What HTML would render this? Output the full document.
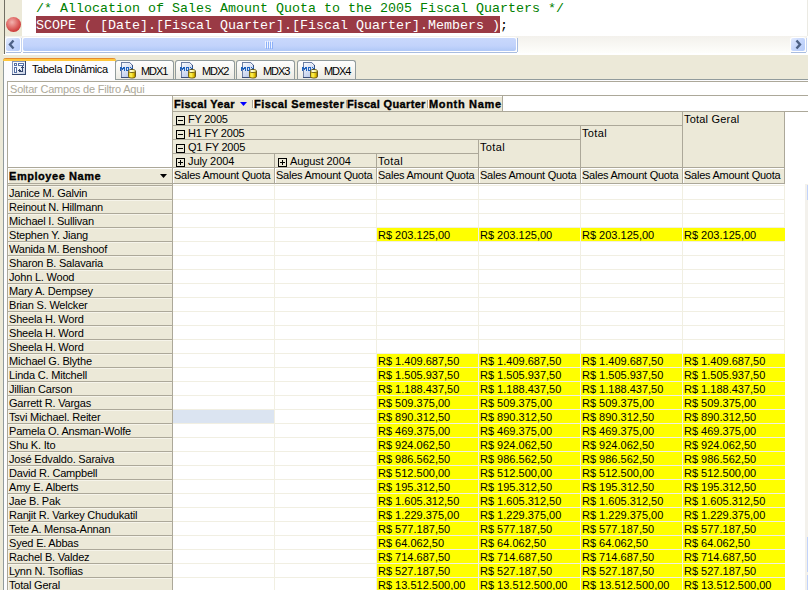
<!DOCTYPE html>
<html><head><meta charset="utf-8"><style>
html,body{margin:0;padding:0}
body{width:808px;height:590px;overflow:hidden;position:relative;background:#ece9d8;font-family:"Liberation Sans",sans-serif}
body>div,body>span,body>svg{position:absolute}
.t,.tb,.tab{font-size:11px;line-height:13px;white-space:nowrap;color:#000}
.tb{font-weight:bold;line-height:15px;-webkit-text-stroke:0.35px #000}
.tab{line-height:15px}
.code{font-family:"Liberation Mono",monospace;font-size:13.333px;line-height:17px;white-space:pre}
.sb{box-sizing:border-box;border-radius:2px;border:1px solid #fff;border-bottom-color:#9fb3d8;border-right-color:#b4c6ea;background:linear-gradient(#dbe5fd,#c6d6fb 50%,#b4cbf7)}
</style></head><body class="">
<div style="left:4px;top:0px;width:804px;height:54px;background:#fff"></div>
<div style="left:4px;top:0px;width:1px;height:54px;background:#716f64"></div>
<div style="left:3px;top:54px;width:805px;height:1px;background:#fff"></div>
<div style="left:5px;top:0px;width:17px;height:36px;background:#ece9d8"></div>
<div style="left:807px;top:0px;width:1px;height:36px;background:#ebeae3"></div>
<div style="left:6px;top:17px;width:15px;height:15px;border-radius:50%;background:radial-gradient(circle at 40% 35%,#f2b2ae 0%,#de6664 45%,#c83232 78%,#9c0e0e 100%)"></div>
<div style="left:36px;top:16px;width:464px;height:17px;background:#9a3a45"></div>
<span class="code" style="left:36px;top:0px;color:#008000">/* Allocation of Sales Amount Quota to the 2005 Fiscal Quarters */</span>
<span class="code" style="left:36px;top:17px;color:#fff">SCOPE ( [Date].[Fiscal Quarter].[Fiscal Quarter].Members )</span>
<span class="code" style="left:500px;top:17px;color:#000">;</span>
<div style="left:5px;top:36px;width:802px;height:17px;background:linear-gradient(#f3f1ec,#fefefb)"></div>
<div style="left:5px;top:37px;width:16px;height:15px;background:#fff;border-radius:3px"></div>
<div style="left:6px;top:52px;width:15px;height:1px;background:#a9bde0"></div>
<div style="left:21px;top:38px;width:1px;height:14px;background:#c4d3f0"></div>
<div style="left:6px;top:38px;width:14px;height:13px;border-radius:2px;background:linear-gradient(135deg,#e3ebfe,#c5d6fc 50%,#b5cbf8)"><svg width="14" height="13" style="position:absolute;left:0;top:0"><path d="M7.5 2.5 L4 6.5 L7.5 10.5" stroke="#4d6185" stroke-width="2.4" fill="none"/></svg></div>
<div style="left:790px;top:37px;width:16px;height:15px;background:#fff;border-radius:3px"></div>
<div style="left:791px;top:52px;width:15px;height:1px;background:#a9bde0"></div>
<div style="left:806px;top:38px;width:1px;height:14px;background:#c4d3f0"></div>
<div style="left:791px;top:38px;width:14px;height:13px;border-radius:2px;background:linear-gradient(135deg,#e3ebfe,#c5d6fc 50%,#b5cbf8)"><svg width="14" height="13" style="position:absolute;left:0;top:0"><path d="M5.5 2.5 L9 6.5 L5.5 10.5" stroke="#4d6185" stroke-width="2.4" fill="none"/></svg></div>
<div style="left:22px;top:37px;width:495px;height:15px;background:#fff;border-radius:3px"></div>
<div style="left:23px;top:52px;width:494px;height:1px;background:#a9bde0"></div>
<div style="left:517px;top:38px;width:1px;height:14px;background:#a9bde0"></div>
<div style="left:23px;top:38px;width:493px;height:13px;border-radius:2px;background:linear-gradient(#c9d8fc,#c2d3fb 60%,#b0c8f7)"><svg width="10" height="8" style="position:absolute;left:242px;top:3px"><path d="M0.5 0v7M2.5 0v7M4.5 0v7M6.5 0v7" stroke="#eef3fe" stroke-width="1"/><path d="M1.5 1v7M3.5 1v7M5.5 1v7M7.5 1v7" stroke="#8cb0f8" stroke-width="1"/></svg></div>
<div style="left:3px;top:79px;width:805px;height:511px;background:#fcfcfe"></div>
<div style="left:3px;top:79px;width:805px;height:1px;background:#919b9c"></div>
<div style="left:3px;top:79px;width:1px;height:511px;background:#919b9c"></div>
<div style="left:3px;top:58px;width:113px;height:22px;background:#fcfcfe;border-left:1px solid #919b9c;border-right:1px solid #919b9c;box-sizing:border-box;border-radius:3px 3px 0 0"></div>
<div style="left:3px;top:58px;width:113px;height:3px;background:linear-gradient(#e68b2c 0,#e68b2c 1px,#ffc73c 1px);border-radius:3px 3px 0 0"></div>
<svg style="left:12px;top:61px" width="14" height="14" viewBox="0 0 14 14" shape-rendering="crispEdges">
<defs><linearGradient id="pg" x1="0" y1="0" x2="1" y2="1"><stop offset="0" stop-color="#ffffff"/><stop offset="0.5" stop-color="#f2f5fb"/><stop offset="1" stop-color="#b9c5de"/></linearGradient></defs>
<rect x="0" y="0" width="14" height="14" fill="url(#pg)"/>
<rect x="0" y="0" width="13" height="1" fill="#8294ba"/><rect x="0" y="0" width="1" height="13" fill="#8294ba"/>
<rect x="0" y="13" width="14" height="1" fill="#34466e"/><rect x="13" y="0" width="1" height="14" fill="#34466e"/>
<rect x="2" y="2" width="3" height="3" fill="#5670a6"/><rect x="3" y="3" width="1" height="1" fill="#fff"/>
<rect x="6" y="2" width="6" height="3" fill="#5670a6"/><rect x="7" y="3" width="4" height="1" fill="#fff"/>
<rect x="2" y="6" width="3" height="6" fill="#5670a6"/><rect x="3" y="7" width="1" height="4" fill="#fff"/>
<rect x="6" y="9" width="3" height="1" fill="#34466e"/><rect x="7" y="8" width="1" height="3" fill="#34466e"/>
<rect x="8" y="10" width="2" height="1" fill="#34466e"/><rect x="10" y="8" width="1" height="3" fill="#34466e"/>
<rect x="9" y="6" width="3" height="1" fill="#34466e"/><rect x="10" y="5" width="1" height="3" fill="#34466e"/>
</svg>
<span class="tab" style="left:32px;top:62px;letter-spacing:-0.38px">Tabela Dinâmica</span>
<div style="left:115px;top:60px;width:59px;height:19px;box-sizing:border-box;border:1px solid #919b9c;border-bottom:none;border-radius:3px 3px 0 0;background:linear-gradient(#fefefe,#f4f3ee 60%,#ebeae4)"></div>
<svg style="left:118px;top:62px" width="18" height="17" viewBox="0 0 18 17" shape-rendering="crispEdges">
<defs><linearGradient id="dg118" x1="0" y1="0" x2="0.6" y2="1"><stop offset="0" stop-color="#ffffff"/><stop offset="1" stop-color="#b8c8ea"/></linearGradient>
<linearGradient id="cg118" x1="0" y1="0" x2="1" y2="0"><stop offset="0" stop-color="#e6c200"/><stop offset="0.35" stop-color="#fff45a"/><stop offset="0.75" stop-color="#e0bd00"/><stop offset="1" stop-color="#7a6200"/></linearGradient></defs>
<path d="M3 0h9l3 3v13H3z" fill="url(#dg118)"/>
<rect x="3" y="0" width="9" height="1" fill="#6d7fa3"/><rect x="3" y="0" width="1" height="16" fill="#6d7fa3"/>
<rect x="3" y="15" width="12" height="1" fill="#3d4f77"/><rect x="14" y="3" width="1" height="13" fill="#3d4f77"/>
<rect x="12" y="1" width="1" height="1" fill="#6d7fa3"/><rect x="13" y="2" width="1" height="1" fill="#6d7fa3"/><rect x="12" y="2" width="1" height="1" fill="#fff"/>
<rect x="2" y="5" width="1" height="1" fill="#1f62bd"/><rect x="3" y="5" width="1" height="1" fill="#1f62bd"/><rect x="5" y="5" width="1" height="1" fill="#1f62bd"/><rect x="6" y="5" width="1" height="1" fill="#1f62bd"/><rect x="2" y="6" width="1" height="1" fill="#1f62bd"/><rect x="3" y="6" width="1" height="1" fill="#1f62bd"/><rect x="4" y="6" width="1" height="1" fill="#1f62bd"/><rect x="5" y="6" width="1" height="1" fill="#1f62bd"/><rect x="6" y="6" width="1" height="1" fill="#1f62bd"/><rect x="2" y="7" width="1" height="1" fill="#1f62bd"/><rect x="4" y="7" width="1" height="1" fill="#1f62bd"/><rect x="6" y="7" width="1" height="1" fill="#1f62bd"/><rect x="2" y="8" width="1" height="1" fill="#1f62bd"/><rect x="6" y="8" width="1" height="1" fill="#1f62bd"/><rect x="8" y="5" width="1" height="1" fill="#1f62bd"/><rect x="9" y="5" width="1" height="1" fill="#1f62bd"/><rect x="10" y="5" width="1" height="1" fill="#1f62bd"/><rect x="8" y="6" width="1" height="1" fill="#1f62bd"/><rect x="10" y="6" width="1" height="1" fill="#1f62bd"/><rect x="8" y="7" width="1" height="1" fill="#1f62bd"/><rect x="10" y="7" width="1" height="1" fill="#1f62bd"/><rect x="8" y="8" width="1" height="1" fill="#1f62bd"/><rect x="9" y="8" width="1" height="1" fill="#1f62bd"/><rect x="10" y="8" width="1" height="1" fill="#1f62bd"/><rect x="12" y="5" width="1" height="1" fill="#1f62bd"/><rect x="14" y="5" width="1" height="1" fill="#1f62bd"/><rect x="13" y="6" width="1" height="1" fill="#1f62bd"/><rect x="12" y="7" width="1" height="1" fill="#1f62bd"/><rect x="13" y="7" width="1" height="1" fill="#1f62bd"/><rect x="14" y="7" width="1" height="1" fill="#1f62bd"/><rect x="12" y="8" width="1" height="1" fill="#1f62bd"/><rect x="14" y="8" width="1" height="1" fill="#1f62bd"/>
<g shape-rendering="auto"><path d="M10.5 9 v5.5 a3.5 1.6 0 0 0 7 0 v-5.5" fill="url(#cg118)" stroke="#5a4800" stroke-width="0.8"/>
<ellipse cx="14" cy="9" rx="3.5" ry="1.6" fill="#fff8a0" stroke="#5a4800" stroke-width="0.8"/>
<ellipse cx="12.8" cy="9" rx="1.3" ry="0.7" fill="#ffffff"/></g>
</svg>
<span class="tab" style="left:141px;top:64px;letter-spacing:-1.1px">MDX1</span>
<div style="left:175px;top:60px;width:60px;height:19px;box-sizing:border-box;border:1px solid #919b9c;border-bottom:none;border-radius:3px 3px 0 0;background:linear-gradient(#fefefe,#f4f3ee 60%,#ebeae4)"></div>
<svg style="left:178px;top:62px" width="18" height="17" viewBox="0 0 18 17" shape-rendering="crispEdges">
<defs><linearGradient id="dg178" x1="0" y1="0" x2="0.6" y2="1"><stop offset="0" stop-color="#ffffff"/><stop offset="1" stop-color="#b8c8ea"/></linearGradient>
<linearGradient id="cg178" x1="0" y1="0" x2="1" y2="0"><stop offset="0" stop-color="#e6c200"/><stop offset="0.35" stop-color="#fff45a"/><stop offset="0.75" stop-color="#e0bd00"/><stop offset="1" stop-color="#7a6200"/></linearGradient></defs>
<path d="M3 0h9l3 3v13H3z" fill="url(#dg178)"/>
<rect x="3" y="0" width="9" height="1" fill="#6d7fa3"/><rect x="3" y="0" width="1" height="16" fill="#6d7fa3"/>
<rect x="3" y="15" width="12" height="1" fill="#3d4f77"/><rect x="14" y="3" width="1" height="13" fill="#3d4f77"/>
<rect x="12" y="1" width="1" height="1" fill="#6d7fa3"/><rect x="13" y="2" width="1" height="1" fill="#6d7fa3"/><rect x="12" y="2" width="1" height="1" fill="#fff"/>
<rect x="2" y="5" width="1" height="1" fill="#1f62bd"/><rect x="3" y="5" width="1" height="1" fill="#1f62bd"/><rect x="5" y="5" width="1" height="1" fill="#1f62bd"/><rect x="6" y="5" width="1" height="1" fill="#1f62bd"/><rect x="2" y="6" width="1" height="1" fill="#1f62bd"/><rect x="3" y="6" width="1" height="1" fill="#1f62bd"/><rect x="4" y="6" width="1" height="1" fill="#1f62bd"/><rect x="5" y="6" width="1" height="1" fill="#1f62bd"/><rect x="6" y="6" width="1" height="1" fill="#1f62bd"/><rect x="2" y="7" width="1" height="1" fill="#1f62bd"/><rect x="4" y="7" width="1" height="1" fill="#1f62bd"/><rect x="6" y="7" width="1" height="1" fill="#1f62bd"/><rect x="2" y="8" width="1" height="1" fill="#1f62bd"/><rect x="6" y="8" width="1" height="1" fill="#1f62bd"/><rect x="8" y="5" width="1" height="1" fill="#1f62bd"/><rect x="9" y="5" width="1" height="1" fill="#1f62bd"/><rect x="10" y="5" width="1" height="1" fill="#1f62bd"/><rect x="8" y="6" width="1" height="1" fill="#1f62bd"/><rect x="10" y="6" width="1" height="1" fill="#1f62bd"/><rect x="8" y="7" width="1" height="1" fill="#1f62bd"/><rect x="10" y="7" width="1" height="1" fill="#1f62bd"/><rect x="8" y="8" width="1" height="1" fill="#1f62bd"/><rect x="9" y="8" width="1" height="1" fill="#1f62bd"/><rect x="10" y="8" width="1" height="1" fill="#1f62bd"/><rect x="12" y="5" width="1" height="1" fill="#1f62bd"/><rect x="14" y="5" width="1" height="1" fill="#1f62bd"/><rect x="13" y="6" width="1" height="1" fill="#1f62bd"/><rect x="12" y="7" width="1" height="1" fill="#1f62bd"/><rect x="13" y="7" width="1" height="1" fill="#1f62bd"/><rect x="14" y="7" width="1" height="1" fill="#1f62bd"/><rect x="12" y="8" width="1" height="1" fill="#1f62bd"/><rect x="14" y="8" width="1" height="1" fill="#1f62bd"/>
<g shape-rendering="auto"><path d="M10.5 9 v5.5 a3.5 1.6 0 0 0 7 0 v-5.5" fill="url(#cg178)" stroke="#5a4800" stroke-width="0.8"/>
<ellipse cx="14" cy="9" rx="3.5" ry="1.6" fill="#fff8a0" stroke="#5a4800" stroke-width="0.8"/>
<ellipse cx="12.8" cy="9" rx="1.3" ry="0.7" fill="#ffffff"/></g>
</svg>
<span class="tab" style="left:202px;top:64px;letter-spacing:-1.1px">MDX2</span>
<div style="left:236px;top:60px;width:59px;height:19px;box-sizing:border-box;border:1px solid #919b9c;border-bottom:none;border-radius:3px 3px 0 0;background:linear-gradient(#fefefe,#f4f3ee 60%,#ebeae4)"></div>
<svg style="left:239px;top:62px" width="18" height="17" viewBox="0 0 18 17" shape-rendering="crispEdges">
<defs><linearGradient id="dg239" x1="0" y1="0" x2="0.6" y2="1"><stop offset="0" stop-color="#ffffff"/><stop offset="1" stop-color="#b8c8ea"/></linearGradient>
<linearGradient id="cg239" x1="0" y1="0" x2="1" y2="0"><stop offset="0" stop-color="#e6c200"/><stop offset="0.35" stop-color="#fff45a"/><stop offset="0.75" stop-color="#e0bd00"/><stop offset="1" stop-color="#7a6200"/></linearGradient></defs>
<path d="M3 0h9l3 3v13H3z" fill="url(#dg239)"/>
<rect x="3" y="0" width="9" height="1" fill="#6d7fa3"/><rect x="3" y="0" width="1" height="16" fill="#6d7fa3"/>
<rect x="3" y="15" width="12" height="1" fill="#3d4f77"/><rect x="14" y="3" width="1" height="13" fill="#3d4f77"/>
<rect x="12" y="1" width="1" height="1" fill="#6d7fa3"/><rect x="13" y="2" width="1" height="1" fill="#6d7fa3"/><rect x="12" y="2" width="1" height="1" fill="#fff"/>
<rect x="2" y="5" width="1" height="1" fill="#1f62bd"/><rect x="3" y="5" width="1" height="1" fill="#1f62bd"/><rect x="5" y="5" width="1" height="1" fill="#1f62bd"/><rect x="6" y="5" width="1" height="1" fill="#1f62bd"/><rect x="2" y="6" width="1" height="1" fill="#1f62bd"/><rect x="3" y="6" width="1" height="1" fill="#1f62bd"/><rect x="4" y="6" width="1" height="1" fill="#1f62bd"/><rect x="5" y="6" width="1" height="1" fill="#1f62bd"/><rect x="6" y="6" width="1" height="1" fill="#1f62bd"/><rect x="2" y="7" width="1" height="1" fill="#1f62bd"/><rect x="4" y="7" width="1" height="1" fill="#1f62bd"/><rect x="6" y="7" width="1" height="1" fill="#1f62bd"/><rect x="2" y="8" width="1" height="1" fill="#1f62bd"/><rect x="6" y="8" width="1" height="1" fill="#1f62bd"/><rect x="8" y="5" width="1" height="1" fill="#1f62bd"/><rect x="9" y="5" width="1" height="1" fill="#1f62bd"/><rect x="10" y="5" width="1" height="1" fill="#1f62bd"/><rect x="8" y="6" width="1" height="1" fill="#1f62bd"/><rect x="10" y="6" width="1" height="1" fill="#1f62bd"/><rect x="8" y="7" width="1" height="1" fill="#1f62bd"/><rect x="10" y="7" width="1" height="1" fill="#1f62bd"/><rect x="8" y="8" width="1" height="1" fill="#1f62bd"/><rect x="9" y="8" width="1" height="1" fill="#1f62bd"/><rect x="10" y="8" width="1" height="1" fill="#1f62bd"/><rect x="12" y="5" width="1" height="1" fill="#1f62bd"/><rect x="14" y="5" width="1" height="1" fill="#1f62bd"/><rect x="13" y="6" width="1" height="1" fill="#1f62bd"/><rect x="12" y="7" width="1" height="1" fill="#1f62bd"/><rect x="13" y="7" width="1" height="1" fill="#1f62bd"/><rect x="14" y="7" width="1" height="1" fill="#1f62bd"/><rect x="12" y="8" width="1" height="1" fill="#1f62bd"/><rect x="14" y="8" width="1" height="1" fill="#1f62bd"/>
<g shape-rendering="auto"><path d="M10.5 9 v5.5 a3.5 1.6 0 0 0 7 0 v-5.5" fill="url(#cg239)" stroke="#5a4800" stroke-width="0.8"/>
<ellipse cx="14" cy="9" rx="3.5" ry="1.6" fill="#fff8a0" stroke="#5a4800" stroke-width="0.8"/>
<ellipse cx="12.8" cy="9" rx="1.3" ry="0.7" fill="#ffffff"/></g>
</svg>
<span class="tab" style="left:263px;top:64px;letter-spacing:-1.1px">MDX3</span>
<div style="left:297px;top:60px;width:59px;height:19px;box-sizing:border-box;border:1px solid #919b9c;border-bottom:none;border-radius:3px 3px 0 0;background:linear-gradient(#fefefe,#f4f3ee 60%,#ebeae4)"></div>
<svg style="left:300px;top:62px" width="18" height="17" viewBox="0 0 18 17" shape-rendering="crispEdges">
<defs><linearGradient id="dg300" x1="0" y1="0" x2="0.6" y2="1"><stop offset="0" stop-color="#ffffff"/><stop offset="1" stop-color="#b8c8ea"/></linearGradient>
<linearGradient id="cg300" x1="0" y1="0" x2="1" y2="0"><stop offset="0" stop-color="#e6c200"/><stop offset="0.35" stop-color="#fff45a"/><stop offset="0.75" stop-color="#e0bd00"/><stop offset="1" stop-color="#7a6200"/></linearGradient></defs>
<path d="M3 0h9l3 3v13H3z" fill="url(#dg300)"/>
<rect x="3" y="0" width="9" height="1" fill="#6d7fa3"/><rect x="3" y="0" width="1" height="16" fill="#6d7fa3"/>
<rect x="3" y="15" width="12" height="1" fill="#3d4f77"/><rect x="14" y="3" width="1" height="13" fill="#3d4f77"/>
<rect x="12" y="1" width="1" height="1" fill="#6d7fa3"/><rect x="13" y="2" width="1" height="1" fill="#6d7fa3"/><rect x="12" y="2" width="1" height="1" fill="#fff"/>
<rect x="2" y="5" width="1" height="1" fill="#1f62bd"/><rect x="3" y="5" width="1" height="1" fill="#1f62bd"/><rect x="5" y="5" width="1" height="1" fill="#1f62bd"/><rect x="6" y="5" width="1" height="1" fill="#1f62bd"/><rect x="2" y="6" width="1" height="1" fill="#1f62bd"/><rect x="3" y="6" width="1" height="1" fill="#1f62bd"/><rect x="4" y="6" width="1" height="1" fill="#1f62bd"/><rect x="5" y="6" width="1" height="1" fill="#1f62bd"/><rect x="6" y="6" width="1" height="1" fill="#1f62bd"/><rect x="2" y="7" width="1" height="1" fill="#1f62bd"/><rect x="4" y="7" width="1" height="1" fill="#1f62bd"/><rect x="6" y="7" width="1" height="1" fill="#1f62bd"/><rect x="2" y="8" width="1" height="1" fill="#1f62bd"/><rect x="6" y="8" width="1" height="1" fill="#1f62bd"/><rect x="8" y="5" width="1" height="1" fill="#1f62bd"/><rect x="9" y="5" width="1" height="1" fill="#1f62bd"/><rect x="10" y="5" width="1" height="1" fill="#1f62bd"/><rect x="8" y="6" width="1" height="1" fill="#1f62bd"/><rect x="10" y="6" width="1" height="1" fill="#1f62bd"/><rect x="8" y="7" width="1" height="1" fill="#1f62bd"/><rect x="10" y="7" width="1" height="1" fill="#1f62bd"/><rect x="8" y="8" width="1" height="1" fill="#1f62bd"/><rect x="9" y="8" width="1" height="1" fill="#1f62bd"/><rect x="10" y="8" width="1" height="1" fill="#1f62bd"/><rect x="12" y="5" width="1" height="1" fill="#1f62bd"/><rect x="14" y="5" width="1" height="1" fill="#1f62bd"/><rect x="13" y="6" width="1" height="1" fill="#1f62bd"/><rect x="12" y="7" width="1" height="1" fill="#1f62bd"/><rect x="13" y="7" width="1" height="1" fill="#1f62bd"/><rect x="14" y="7" width="1" height="1" fill="#1f62bd"/><rect x="12" y="8" width="1" height="1" fill="#1f62bd"/><rect x="14" y="8" width="1" height="1" fill="#1f62bd"/>
<g shape-rendering="auto"><path d="M10.5 9 v5.5 a3.5 1.6 0 0 0 7 0 v-5.5" fill="url(#cg300)" stroke="#5a4800" stroke-width="0.8"/>
<ellipse cx="14" cy="9" rx="3.5" ry="1.6" fill="#fff8a0" stroke="#5a4800" stroke-width="0.8"/>
<ellipse cx="12.8" cy="9" rx="1.3" ry="0.7" fill="#ffffff"/></g>
</svg>
<span class="tab" style="left:324px;top:64px;letter-spacing:-1.1px">MDX4</span>
<div style="left:7px;top:81px;width:801px;height:15px;background:#fff;border:1px solid #aca899;border-right:none;box-sizing:border-box"></div>
<span class="t" style="left:10px;top:83px;color:#aca899;letter-spacing:-0.2px">Soltar Campos de Filtro Aqui</span>
<div style="left:7px;top:95px;width:1px;height:495px;background:#aca899"></div>
<div style="left:8px;top:96px;width:800px;height:494px;background:#fff"></div>
<div style="left:173px;top:96px;width:330px;height:15px;background:#ece9d8;border-top:1px solid #fff;box-sizing:border-box"></div>
<div style="left:172px;top:95px;width:1px;height:495px;background:#aca899"></div>
<div style="left:502px;top:96px;width:1px;height:15px;background:#aca899"></div>
<div style="left:173px;top:111px;width:635px;height:1px;background:#aca899"></div>
<span class="tb" style="left:174px;top:97px;letter-spacing:0.32px">Fiscal Year</span>
<svg style="left:240px;top:102px" width="7" height="4"><path d="M0 0h7L3.5 4z" fill="#0000ff"/></svg>
<div style="left:252px;top:100px;width:1px;height:8px;background:#aca899"></div>
<div style="left:253px;top:100px;width:1px;height:8px;background:#fff"></div>
<span class="tb" style="left:254px;top:97px;letter-spacing:0.44px">Fiscal Semester</span>
<div style="left:346px;top:100px;width:1px;height:8px;background:#aca899"></div>
<div style="left:347px;top:100px;width:1px;height:8px;background:#fff"></div>
<span class="tb" style="left:347px;top:97px;letter-spacing:0.34px">Fiscal Quarter</span>
<div style="left:427px;top:100px;width:1px;height:8px;background:#aca899"></div>
<div style="left:428px;top:100px;width:1px;height:8px;background:#fff"></div>
<span class="tb" style="left:429px;top:97px;letter-spacing:0.67px">Month Name</span>
<div style="left:173px;top:112px;width:509px;height:13px;background:#ece9d8;box-sizing:border-box"></div>
<div style="left:682px;top:112px;width:1px;height:14px;background:#aca899"></div>
<div style="left:172px;top:125px;width:511px;height:1px;background:#aca899"></div>
<svg style="left:176px;top:116px" width="9" height="9"><rect x="0.5" y="0.5" width="8" height="8" fill="none" stroke="#000"/><path d="M2 4.5h5" stroke="#000"/></svg>
<span class="t" style="left:188px;top:113px;letter-spacing:-0.25px">FY 2005</span>
<div style="left:683px;top:112px;width:101px;height:55px;background:#ece9d8;box-sizing:border-box"></div>
<div style="left:784px;top:112px;width:1px;height:56px;background:#aca899"></div>
<div style="left:682px;top:167px;width:103px;height:1px;background:#aca899"></div>
<span class="t" style="left:684px;top:113px;letter-spacing:0.2px">Total Geral</span>
<div style="left:173px;top:126px;width:407px;height:13px;background:#ece9d8;box-sizing:border-box"></div>
<div style="left:580px;top:126px;width:1px;height:14px;background:#aca899"></div>
<div style="left:172px;top:139px;width:409px;height:1px;background:#aca899"></div>
<svg style="left:176px;top:130px" width="9" height="9"><rect x="0.5" y="0.5" width="8" height="8" fill="none" stroke="#000"/><path d="M2 4.5h5" stroke="#000"/></svg>
<span class="t" style="left:188px;top:127px;letter-spacing:-0.2px">H1 FY 2005</span>
<div style="left:581px;top:126px;width:101px;height:41px;background:#ece9d8;box-sizing:border-box"></div>
<div style="left:682px;top:126px;width:1px;height:42px;background:#aca899"></div>
<div style="left:580px;top:167px;width:103px;height:1px;background:#aca899"></div>
<span class="t" style="left:582px;top:127px;letter-spacing:0.35px">Total</span>
<div style="left:173px;top:140px;width:305px;height:13px;background:#ece9d8;box-sizing:border-box"></div>
<div style="left:478px;top:140px;width:1px;height:14px;background:#aca899"></div>
<div style="left:172px;top:153px;width:307px;height:1px;background:#aca899"></div>
<svg style="left:176px;top:144px" width="9" height="9"><rect x="0.5" y="0.5" width="8" height="8" fill="none" stroke="#000"/><path d="M2 4.5h5" stroke="#000"/></svg>
<span class="t" style="left:188px;top:141px;letter-spacing:-0.2px">Q1 FY 2005</span>
<div style="left:479px;top:140px;width:101px;height:27px;background:#ece9d8;box-sizing:border-box"></div>
<div style="left:580px;top:140px;width:1px;height:28px;background:#aca899"></div>
<div style="left:478px;top:167px;width:103px;height:1px;background:#aca899"></div>
<span class="t" style="left:480px;top:141px;letter-spacing:0.35px">Total</span>
<div style="left:173px;top:154px;width:101px;height:13px;background:#ece9d8;box-sizing:border-box"></div>
<div style="left:274px;top:154px;width:1px;height:14px;background:#aca899"></div>
<div style="left:172px;top:167px;width:103px;height:1px;background:#aca899"></div>
<svg style="left:176px;top:158px" width="9" height="9"><rect x="0.5" y="0.5" width="8" height="8" fill="none" stroke="#000"/><path d="M2 4.5h5M4.5 2v5" stroke="#000"/></svg>
<span class="t" style="left:188px;top:155px;letter-spacing:-0.1px">July 2004</span>
<div style="left:275px;top:154px;width:101px;height:13px;background:#ece9d8;box-sizing:border-box"></div>
<div style="left:376px;top:154px;width:1px;height:14px;background:#aca899"></div>
<div style="left:274px;top:167px;width:103px;height:1px;background:#aca899"></div>
<svg style="left:278px;top:158px" width="9" height="9"><rect x="0.5" y="0.5" width="8" height="8" fill="none" stroke="#000"/><path d="M2 4.5h5M4.5 2v5" stroke="#000"/></svg>
<span class="t" style="left:290px;top:155px;letter-spacing:-0.1px">August 2004</span>
<div style="left:377px;top:154px;width:101px;height:13px;background:#ece9d8;box-sizing:border-box"></div>
<div style="left:478px;top:154px;width:1px;height:14px;background:#aca899"></div>
<div style="left:376px;top:167px;width:103px;height:1px;background:#aca899"></div>
<span class="t" style="left:378px;top:155px;letter-spacing:0.35px">Total</span>
<div style="left:173px;top:168px;width:101px;height:15px;background:#ece9d8;border-left:1px solid #fff;border-top:1px solid #fff;box-sizing:border-box"></div>
<div style="left:274px;top:168px;width:1px;height:16px;background:#aca899"></div>
<div style="left:172px;top:183px;width:103px;height:1px;background:#aca899"></div>
<span class="t" style="left:174px;top:169px;letter-spacing:-0.25px">Sales Amount Quota</span>
<div style="left:275px;top:168px;width:101px;height:15px;background:#ece9d8;border-left:1px solid #fff;border-top:1px solid #fff;box-sizing:border-box"></div>
<div style="left:376px;top:168px;width:1px;height:16px;background:#aca899"></div>
<div style="left:274px;top:183px;width:103px;height:1px;background:#aca899"></div>
<span class="t" style="left:276px;top:169px;letter-spacing:-0.25px">Sales Amount Quota</span>
<div style="left:377px;top:168px;width:101px;height:15px;background:#ece9d8;border-left:1px solid #fff;border-top:1px solid #fff;box-sizing:border-box"></div>
<div style="left:478px;top:168px;width:1px;height:16px;background:#aca899"></div>
<div style="left:376px;top:183px;width:103px;height:1px;background:#aca899"></div>
<span class="t" style="left:378px;top:169px;letter-spacing:-0.25px">Sales Amount Quota</span>
<div style="left:479px;top:168px;width:101px;height:15px;background:#ece9d8;border-left:1px solid #fff;border-top:1px solid #fff;box-sizing:border-box"></div>
<div style="left:580px;top:168px;width:1px;height:16px;background:#aca899"></div>
<div style="left:478px;top:183px;width:103px;height:1px;background:#aca899"></div>
<span class="t" style="left:480px;top:169px;letter-spacing:-0.25px">Sales Amount Quota</span>
<div style="left:581px;top:168px;width:101px;height:15px;background:#ece9d8;border-left:1px solid #fff;border-top:1px solid #fff;box-sizing:border-box"></div>
<div style="left:682px;top:168px;width:1px;height:16px;background:#aca899"></div>
<div style="left:580px;top:183px;width:103px;height:1px;background:#aca899"></div>
<span class="t" style="left:582px;top:169px;letter-spacing:-0.25px">Sales Amount Quota</span>
<div style="left:683px;top:168px;width:101px;height:15px;background:#ece9d8;border-left:1px solid #fff;border-top:1px solid #fff;box-sizing:border-box"></div>
<div style="left:784px;top:168px;width:1px;height:16px;background:#aca899"></div>
<div style="left:682px;top:183px;width:103px;height:1px;background:#aca899"></div>
<span class="t" style="left:684px;top:169px;letter-spacing:-0.25px">Sales Amount Quota</span>
<div style="left:8px;top:168px;width:164px;height:15px;background:#ece9d8;border-left:1px solid #fff;border-top:1px solid #fff;box-sizing:border-box"></div>
<div style="left:8px;top:167px;width:164px;height:1px;background:#aca899"></div>
<div style="left:8px;top:183px;width:164px;height:1px;background:#aca899"></div>
<div style="left:8px;top:184px;width:164px;height:1px;background:#ece9d8"></div>
<div style="left:8px;top:185px;width:164px;height:1px;background:#aca899"></div>
<span class="tb" style="left:9px;top:169px;letter-spacing:0.55px">Employee Name</span>
<svg style="left:160px;top:174px" width="7" height="4"><path d="M0 0h7L3.5 4z" fill="#000"/></svg>
<div style="left:274px;top:184px;width:1px;height:406px;background:#f1efe2"></div>
<div style="left:376px;top:184px;width:1px;height:406px;background:#f1efe2"></div>
<div style="left:478px;top:184px;width:1px;height:406px;background:#f1efe2"></div>
<div style="left:580px;top:184px;width:1px;height:406px;background:#f1efe2"></div>
<div style="left:682px;top:184px;width:1px;height:406px;background:#f1efe2"></div>
<div style="left:784px;top:184px;width:1px;height:406px;background:#f1efe2"></div>
<div style="left:173px;top:185px;width:612px;height:1px;background:#f1efe2"></div>
<div style="left:8px;top:186px;width:164px;height:13px;background:#ece9d8;border-left:1px solid #f6f4ea;border-top:1px solid #f6f4ea;box-sizing:border-box"></div>
<div style="left:8px;top:199px;width:164px;height:1px;background:#aca899"></div>
<span class="t" style="left:9px;top:187px;letter-spacing:-0.2px">Janice M. Galvin</span>
<div style="left:173px;top:199px;width:612px;height:1px;background:#f1efe2"></div>
<div style="left:8px;top:200px;width:164px;height:13px;background:#ece9d8;border-left:1px solid #f6f4ea;border-top:1px solid #f6f4ea;box-sizing:border-box"></div>
<div style="left:8px;top:213px;width:164px;height:1px;background:#aca899"></div>
<span class="t" style="left:9px;top:201px;letter-spacing:-0.2px">Reinout N. Hillmann</span>
<div style="left:173px;top:213px;width:612px;height:1px;background:#f1efe2"></div>
<div style="left:8px;top:214px;width:164px;height:13px;background:#ece9d8;border-left:1px solid #f6f4ea;border-top:1px solid #f6f4ea;box-sizing:border-box"></div>
<div style="left:8px;top:227px;width:164px;height:1px;background:#aca899"></div>
<span class="t" style="left:9px;top:215px;letter-spacing:-0.2px">Michael I. Sullivan</span>
<div style="left:173px;top:227px;width:612px;height:1px;background:#f1efe2"></div>
<div style="left:8px;top:228px;width:164px;height:13px;background:#ece9d8;border-left:1px solid #f6f4ea;border-top:1px solid #f6f4ea;box-sizing:border-box"></div>
<div style="left:8px;top:241px;width:164px;height:1px;background:#aca899"></div>
<span class="t" style="left:9px;top:229px;letter-spacing:-0.2px">Stephen Y. Jiang</span>
<div style="left:377px;top:228px;width:101px;height:13px;background:#ffff00"></div>
<span class="t" style="left:378px;top:229px;">R$ 203.125,00</span>
<div style="left:479px;top:228px;width:101px;height:13px;background:#ffff00"></div>
<span class="t" style="left:480px;top:229px;">R$ 203.125,00</span>
<div style="left:581px;top:228px;width:101px;height:13px;background:#ffff00"></div>
<span class="t" style="left:582px;top:229px;">R$ 203.125,00</span>
<div style="left:683px;top:228px;width:102px;height:13px;background:#ffff00"></div>
<span class="t" style="left:684px;top:229px;">R$ 203.125,00</span>
<div style="left:173px;top:241px;width:612px;height:1px;background:#f1efe2"></div>
<div style="left:8px;top:242px;width:164px;height:13px;background:#ece9d8;border-left:1px solid #f6f4ea;border-top:1px solid #f6f4ea;box-sizing:border-box"></div>
<div style="left:8px;top:255px;width:164px;height:1px;background:#aca899"></div>
<span class="t" style="left:9px;top:243px;letter-spacing:-0.2px">Wanida M. Benshoof</span>
<div style="left:173px;top:255px;width:612px;height:1px;background:#f1efe2"></div>
<div style="left:8px;top:256px;width:164px;height:13px;background:#ece9d8;border-left:1px solid #f6f4ea;border-top:1px solid #f6f4ea;box-sizing:border-box"></div>
<div style="left:8px;top:269px;width:164px;height:1px;background:#aca899"></div>
<span class="t" style="left:9px;top:257px;letter-spacing:-0.2px">Sharon B. Salavaria</span>
<div style="left:173px;top:269px;width:612px;height:1px;background:#f1efe2"></div>
<div style="left:8px;top:270px;width:164px;height:13px;background:#ece9d8;border-left:1px solid #f6f4ea;border-top:1px solid #f6f4ea;box-sizing:border-box"></div>
<div style="left:8px;top:283px;width:164px;height:1px;background:#aca899"></div>
<span class="t" style="left:9px;top:271px;letter-spacing:-0.2px">John L. Wood</span>
<div style="left:173px;top:283px;width:612px;height:1px;background:#f1efe2"></div>
<div style="left:8px;top:284px;width:164px;height:13px;background:#ece9d8;border-left:1px solid #f6f4ea;border-top:1px solid #f6f4ea;box-sizing:border-box"></div>
<div style="left:8px;top:297px;width:164px;height:1px;background:#aca899"></div>
<span class="t" style="left:9px;top:285px;letter-spacing:-0.2px">Mary A. Dempsey</span>
<div style="left:173px;top:297px;width:612px;height:1px;background:#f1efe2"></div>
<div style="left:8px;top:298px;width:164px;height:13px;background:#ece9d8;border-left:1px solid #f6f4ea;border-top:1px solid #f6f4ea;box-sizing:border-box"></div>
<div style="left:8px;top:311px;width:164px;height:1px;background:#aca899"></div>
<span class="t" style="left:9px;top:299px;letter-spacing:-0.2px">Brian S. Welcker</span>
<div style="left:173px;top:311px;width:612px;height:1px;background:#f1efe2"></div>
<div style="left:8px;top:312px;width:164px;height:13px;background:#ece9d8;border-left:1px solid #f6f4ea;border-top:1px solid #f6f4ea;box-sizing:border-box"></div>
<div style="left:8px;top:325px;width:164px;height:1px;background:#aca899"></div>
<span class="t" style="left:9px;top:313px;letter-spacing:-0.2px">Sheela H. Word</span>
<div style="left:173px;top:325px;width:612px;height:1px;background:#f1efe2"></div>
<div style="left:8px;top:326px;width:164px;height:13px;background:#ece9d8;border-left:1px solid #f6f4ea;border-top:1px solid #f6f4ea;box-sizing:border-box"></div>
<div style="left:8px;top:339px;width:164px;height:1px;background:#aca899"></div>
<span class="t" style="left:9px;top:327px;letter-spacing:-0.2px">Sheela H. Word</span>
<div style="left:173px;top:339px;width:612px;height:1px;background:#f1efe2"></div>
<div style="left:8px;top:340px;width:164px;height:13px;background:#ece9d8;border-left:1px solid #f6f4ea;border-top:1px solid #f6f4ea;box-sizing:border-box"></div>
<div style="left:8px;top:353px;width:164px;height:1px;background:#aca899"></div>
<span class="t" style="left:9px;top:341px;letter-spacing:-0.2px">Sheela H. Word</span>
<div style="left:173px;top:353px;width:612px;height:1px;background:#f1efe2"></div>
<div style="left:8px;top:354px;width:164px;height:13px;background:#ece9d8;border-left:1px solid #f6f4ea;border-top:1px solid #f6f4ea;box-sizing:border-box"></div>
<div style="left:8px;top:367px;width:164px;height:1px;background:#aca899"></div>
<span class="t" style="left:9px;top:355px;letter-spacing:-0.2px">Michael G. Blythe</span>
<div style="left:377px;top:354px;width:101px;height:13px;background:#ffff00"></div>
<span class="t" style="left:378px;top:355px;">R$ 1.409.687,50</span>
<div style="left:479px;top:354px;width:101px;height:13px;background:#ffff00"></div>
<span class="t" style="left:480px;top:355px;">R$ 1.409.687,50</span>
<div style="left:581px;top:354px;width:101px;height:13px;background:#ffff00"></div>
<span class="t" style="left:582px;top:355px;">R$ 1.409.687,50</span>
<div style="left:683px;top:354px;width:102px;height:13px;background:#ffff00"></div>
<span class="t" style="left:684px;top:355px;">R$ 1.409.687,50</span>
<div style="left:173px;top:367px;width:612px;height:1px;background:#f1efe2"></div>
<div style="left:8px;top:368px;width:164px;height:13px;background:#ece9d8;border-left:1px solid #f6f4ea;border-top:1px solid #f6f4ea;box-sizing:border-box"></div>
<div style="left:8px;top:381px;width:164px;height:1px;background:#aca899"></div>
<span class="t" style="left:9px;top:369px;letter-spacing:-0.2px">Linda C. Mitchell</span>
<div style="left:377px;top:368px;width:101px;height:13px;background:#ffff00"></div>
<span class="t" style="left:378px;top:369px;">R$ 1.505.937,50</span>
<div style="left:479px;top:368px;width:101px;height:13px;background:#ffff00"></div>
<span class="t" style="left:480px;top:369px;">R$ 1.505.937,50</span>
<div style="left:581px;top:368px;width:101px;height:13px;background:#ffff00"></div>
<span class="t" style="left:582px;top:369px;">R$ 1.505.937,50</span>
<div style="left:683px;top:368px;width:102px;height:13px;background:#ffff00"></div>
<span class="t" style="left:684px;top:369px;">R$ 1.505.937,50</span>
<div style="left:173px;top:381px;width:612px;height:1px;background:#f1efe2"></div>
<div style="left:8px;top:382px;width:164px;height:13px;background:#ece9d8;border-left:1px solid #f6f4ea;border-top:1px solid #f6f4ea;box-sizing:border-box"></div>
<div style="left:8px;top:395px;width:164px;height:1px;background:#aca899"></div>
<span class="t" style="left:9px;top:383px;letter-spacing:-0.2px">Jillian Carson</span>
<div style="left:377px;top:382px;width:101px;height:13px;background:#ffff00"></div>
<span class="t" style="left:378px;top:383px;">R$ 1.188.437,50</span>
<div style="left:479px;top:382px;width:101px;height:13px;background:#ffff00"></div>
<span class="t" style="left:480px;top:383px;">R$ 1.188.437,50</span>
<div style="left:581px;top:382px;width:101px;height:13px;background:#ffff00"></div>
<span class="t" style="left:582px;top:383px;">R$ 1.188.437,50</span>
<div style="left:683px;top:382px;width:102px;height:13px;background:#ffff00"></div>
<span class="t" style="left:684px;top:383px;">R$ 1.188.437,50</span>
<div style="left:173px;top:395px;width:612px;height:1px;background:#f1efe2"></div>
<div style="left:8px;top:396px;width:164px;height:13px;background:#ece9d8;border-left:1px solid #f6f4ea;border-top:1px solid #f6f4ea;box-sizing:border-box"></div>
<div style="left:8px;top:409px;width:164px;height:1px;background:#aca899"></div>
<span class="t" style="left:9px;top:397px;letter-spacing:-0.2px">Garrett R. Vargas</span>
<div style="left:377px;top:396px;width:101px;height:13px;background:#ffff00"></div>
<span class="t" style="left:378px;top:397px;">R$ 509.375,00</span>
<div style="left:479px;top:396px;width:101px;height:13px;background:#ffff00"></div>
<span class="t" style="left:480px;top:397px;">R$ 509.375,00</span>
<div style="left:581px;top:396px;width:101px;height:13px;background:#ffff00"></div>
<span class="t" style="left:582px;top:397px;">R$ 509.375,00</span>
<div style="left:683px;top:396px;width:102px;height:13px;background:#ffff00"></div>
<span class="t" style="left:684px;top:397px;">R$ 509.375,00</span>
<div style="left:173px;top:409px;width:612px;height:1px;background:#f1efe2"></div>
<div style="left:8px;top:410px;width:164px;height:13px;background:#ece9d8;border-left:1px solid #f6f4ea;border-top:1px solid #f6f4ea;box-sizing:border-box"></div>
<div style="left:8px;top:423px;width:164px;height:1px;background:#aca899"></div>
<span class="t" style="left:9px;top:411px;letter-spacing:-0.2px">Tsvi Michael. Reiter</span>
<div style="left:377px;top:410px;width:101px;height:13px;background:#ffff00"></div>
<span class="t" style="left:378px;top:411px;">R$ 890.312,50</span>
<div style="left:479px;top:410px;width:101px;height:13px;background:#ffff00"></div>
<span class="t" style="left:480px;top:411px;">R$ 890.312,50</span>
<div style="left:581px;top:410px;width:101px;height:13px;background:#ffff00"></div>
<span class="t" style="left:582px;top:411px;">R$ 890.312,50</span>
<div style="left:683px;top:410px;width:102px;height:13px;background:#ffff00"></div>
<span class="t" style="left:684px;top:411px;">R$ 890.312,50</span>
<div style="left:173px;top:423px;width:612px;height:1px;background:#f1efe2"></div>
<div style="left:8px;top:424px;width:164px;height:13px;background:#ece9d8;border-left:1px solid #f6f4ea;border-top:1px solid #f6f4ea;box-sizing:border-box"></div>
<div style="left:8px;top:437px;width:164px;height:1px;background:#aca899"></div>
<span class="t" style="left:9px;top:425px;letter-spacing:-0.2px">Pamela O. Ansman-Wolfe</span>
<div style="left:377px;top:424px;width:101px;height:13px;background:#ffff00"></div>
<span class="t" style="left:378px;top:425px;">R$ 469.375,00</span>
<div style="left:479px;top:424px;width:101px;height:13px;background:#ffff00"></div>
<span class="t" style="left:480px;top:425px;">R$ 469.375,00</span>
<div style="left:581px;top:424px;width:101px;height:13px;background:#ffff00"></div>
<span class="t" style="left:582px;top:425px;">R$ 469.375,00</span>
<div style="left:683px;top:424px;width:102px;height:13px;background:#ffff00"></div>
<span class="t" style="left:684px;top:425px;">R$ 469.375,00</span>
<div style="left:173px;top:437px;width:612px;height:1px;background:#f1efe2"></div>
<div style="left:8px;top:438px;width:164px;height:13px;background:#ece9d8;border-left:1px solid #f6f4ea;border-top:1px solid #f6f4ea;box-sizing:border-box"></div>
<div style="left:8px;top:451px;width:164px;height:1px;background:#aca899"></div>
<span class="t" style="left:9px;top:439px;letter-spacing:-0.2px">Shu K. Ito</span>
<div style="left:377px;top:438px;width:101px;height:13px;background:#ffff00"></div>
<span class="t" style="left:378px;top:439px;">R$ 924.062,50</span>
<div style="left:479px;top:438px;width:101px;height:13px;background:#ffff00"></div>
<span class="t" style="left:480px;top:439px;">R$ 924.062,50</span>
<div style="left:581px;top:438px;width:101px;height:13px;background:#ffff00"></div>
<span class="t" style="left:582px;top:439px;">R$ 924.062,50</span>
<div style="left:683px;top:438px;width:102px;height:13px;background:#ffff00"></div>
<span class="t" style="left:684px;top:439px;">R$ 924.062,50</span>
<div style="left:173px;top:451px;width:612px;height:1px;background:#f1efe2"></div>
<div style="left:8px;top:452px;width:164px;height:13px;background:#ece9d8;border-left:1px solid #f6f4ea;border-top:1px solid #f6f4ea;box-sizing:border-box"></div>
<div style="left:8px;top:465px;width:164px;height:1px;background:#aca899"></div>
<span class="t" style="left:9px;top:453px;letter-spacing:-0.2px">José Edvaldo. Saraiva</span>
<div style="left:377px;top:452px;width:101px;height:13px;background:#ffff00"></div>
<span class="t" style="left:378px;top:453px;">R$ 986.562,50</span>
<div style="left:479px;top:452px;width:101px;height:13px;background:#ffff00"></div>
<span class="t" style="left:480px;top:453px;">R$ 986.562,50</span>
<div style="left:581px;top:452px;width:101px;height:13px;background:#ffff00"></div>
<span class="t" style="left:582px;top:453px;">R$ 986.562,50</span>
<div style="left:683px;top:452px;width:102px;height:13px;background:#ffff00"></div>
<span class="t" style="left:684px;top:453px;">R$ 986.562,50</span>
<div style="left:173px;top:465px;width:612px;height:1px;background:#f1efe2"></div>
<div style="left:8px;top:466px;width:164px;height:13px;background:#ece9d8;border-left:1px solid #f6f4ea;border-top:1px solid #f6f4ea;box-sizing:border-box"></div>
<div style="left:8px;top:479px;width:164px;height:1px;background:#aca899"></div>
<span class="t" style="left:9px;top:467px;letter-spacing:-0.2px">David R. Campbell</span>
<div style="left:377px;top:466px;width:101px;height:13px;background:#ffff00"></div>
<span class="t" style="left:378px;top:467px;">R$ 512.500,00</span>
<div style="left:479px;top:466px;width:101px;height:13px;background:#ffff00"></div>
<span class="t" style="left:480px;top:467px;">R$ 512.500,00</span>
<div style="left:581px;top:466px;width:101px;height:13px;background:#ffff00"></div>
<span class="t" style="left:582px;top:467px;">R$ 512.500,00</span>
<div style="left:683px;top:466px;width:102px;height:13px;background:#ffff00"></div>
<span class="t" style="left:684px;top:467px;">R$ 512.500,00</span>
<div style="left:173px;top:479px;width:612px;height:1px;background:#f1efe2"></div>
<div style="left:8px;top:480px;width:164px;height:13px;background:#ece9d8;border-left:1px solid #f6f4ea;border-top:1px solid #f6f4ea;box-sizing:border-box"></div>
<div style="left:8px;top:493px;width:164px;height:1px;background:#aca899"></div>
<span class="t" style="left:9px;top:481px;letter-spacing:-0.2px">Amy E. Alberts</span>
<div style="left:377px;top:480px;width:101px;height:13px;background:#ffff00"></div>
<span class="t" style="left:378px;top:481px;">R$ 195.312,50</span>
<div style="left:479px;top:480px;width:101px;height:13px;background:#ffff00"></div>
<span class="t" style="left:480px;top:481px;">R$ 195.312,50</span>
<div style="left:581px;top:480px;width:101px;height:13px;background:#ffff00"></div>
<span class="t" style="left:582px;top:481px;">R$ 195.312,50</span>
<div style="left:683px;top:480px;width:102px;height:13px;background:#ffff00"></div>
<span class="t" style="left:684px;top:481px;">R$ 195.312,50</span>
<div style="left:173px;top:493px;width:612px;height:1px;background:#f1efe2"></div>
<div style="left:8px;top:494px;width:164px;height:13px;background:#ece9d8;border-left:1px solid #f6f4ea;border-top:1px solid #f6f4ea;box-sizing:border-box"></div>
<div style="left:8px;top:507px;width:164px;height:1px;background:#aca899"></div>
<span class="t" style="left:9px;top:495px;letter-spacing:-0.2px">Jae B. Pak</span>
<div style="left:377px;top:494px;width:101px;height:13px;background:#ffff00"></div>
<span class="t" style="left:378px;top:495px;">R$ 1.605.312,50</span>
<div style="left:479px;top:494px;width:101px;height:13px;background:#ffff00"></div>
<span class="t" style="left:480px;top:495px;">R$ 1.605.312,50</span>
<div style="left:581px;top:494px;width:101px;height:13px;background:#ffff00"></div>
<span class="t" style="left:582px;top:495px;">R$ 1.605.312,50</span>
<div style="left:683px;top:494px;width:102px;height:13px;background:#ffff00"></div>
<span class="t" style="left:684px;top:495px;">R$ 1.605.312,50</span>
<div style="left:173px;top:507px;width:612px;height:1px;background:#f1efe2"></div>
<div style="left:8px;top:508px;width:164px;height:13px;background:#ece9d8;border-left:1px solid #f6f4ea;border-top:1px solid #f6f4ea;box-sizing:border-box"></div>
<div style="left:8px;top:521px;width:164px;height:1px;background:#aca899"></div>
<span class="t" style="left:9px;top:509px;letter-spacing:-0.2px">Ranjit R. Varkey Chudukatil</span>
<div style="left:377px;top:508px;width:101px;height:13px;background:#ffff00"></div>
<span class="t" style="left:378px;top:509px;">R$ 1.229.375,00</span>
<div style="left:479px;top:508px;width:101px;height:13px;background:#ffff00"></div>
<span class="t" style="left:480px;top:509px;">R$ 1.229.375,00</span>
<div style="left:581px;top:508px;width:101px;height:13px;background:#ffff00"></div>
<span class="t" style="left:582px;top:509px;">R$ 1.229.375,00</span>
<div style="left:683px;top:508px;width:102px;height:13px;background:#ffff00"></div>
<span class="t" style="left:684px;top:509px;">R$ 1.229.375,00</span>
<div style="left:173px;top:521px;width:612px;height:1px;background:#f1efe2"></div>
<div style="left:8px;top:522px;width:164px;height:13px;background:#ece9d8;border-left:1px solid #f6f4ea;border-top:1px solid #f6f4ea;box-sizing:border-box"></div>
<div style="left:8px;top:535px;width:164px;height:1px;background:#aca899"></div>
<span class="t" style="left:9px;top:523px;letter-spacing:-0.2px">Tete A. Mensa-Annan</span>
<div style="left:377px;top:522px;width:101px;height:13px;background:#ffff00"></div>
<span class="t" style="left:378px;top:523px;">R$ 577.187,50</span>
<div style="left:479px;top:522px;width:101px;height:13px;background:#ffff00"></div>
<span class="t" style="left:480px;top:523px;">R$ 577.187,50</span>
<div style="left:581px;top:522px;width:101px;height:13px;background:#ffff00"></div>
<span class="t" style="left:582px;top:523px;">R$ 577.187,50</span>
<div style="left:683px;top:522px;width:102px;height:13px;background:#ffff00"></div>
<span class="t" style="left:684px;top:523px;">R$ 577.187,50</span>
<div style="left:173px;top:535px;width:612px;height:1px;background:#f1efe2"></div>
<div style="left:8px;top:536px;width:164px;height:13px;background:#ece9d8;border-left:1px solid #f6f4ea;border-top:1px solid #f6f4ea;box-sizing:border-box"></div>
<div style="left:8px;top:549px;width:164px;height:1px;background:#aca899"></div>
<span class="t" style="left:9px;top:537px;letter-spacing:-0.2px">Syed E. Abbas</span>
<div style="left:377px;top:536px;width:101px;height:13px;background:#ffff00"></div>
<span class="t" style="left:378px;top:537px;">R$ 64.062,50</span>
<div style="left:479px;top:536px;width:101px;height:13px;background:#ffff00"></div>
<span class="t" style="left:480px;top:537px;">R$ 64.062,50</span>
<div style="left:581px;top:536px;width:101px;height:13px;background:#ffff00"></div>
<span class="t" style="left:582px;top:537px;">R$ 64.062,50</span>
<div style="left:683px;top:536px;width:102px;height:13px;background:#ffff00"></div>
<span class="t" style="left:684px;top:537px;">R$ 64.062,50</span>
<div style="left:173px;top:549px;width:612px;height:1px;background:#f1efe2"></div>
<div style="left:8px;top:550px;width:164px;height:13px;background:#ece9d8;border-left:1px solid #f6f4ea;border-top:1px solid #f6f4ea;box-sizing:border-box"></div>
<div style="left:8px;top:563px;width:164px;height:1px;background:#aca899"></div>
<span class="t" style="left:9px;top:551px;letter-spacing:-0.2px">Rachel B. Valdez</span>
<div style="left:377px;top:550px;width:101px;height:13px;background:#ffff00"></div>
<span class="t" style="left:378px;top:551px;">R$ 714.687,50</span>
<div style="left:479px;top:550px;width:101px;height:13px;background:#ffff00"></div>
<span class="t" style="left:480px;top:551px;">R$ 714.687,50</span>
<div style="left:581px;top:550px;width:101px;height:13px;background:#ffff00"></div>
<span class="t" style="left:582px;top:551px;">R$ 714.687,50</span>
<div style="left:683px;top:550px;width:102px;height:13px;background:#ffff00"></div>
<span class="t" style="left:684px;top:551px;">R$ 714.687,50</span>
<div style="left:173px;top:563px;width:612px;height:1px;background:#f1efe2"></div>
<div style="left:8px;top:564px;width:164px;height:13px;background:#ece9d8;border-left:1px solid #f6f4ea;border-top:1px solid #f6f4ea;box-sizing:border-box"></div>
<div style="left:8px;top:577px;width:164px;height:1px;background:#aca899"></div>
<span class="t" style="left:9px;top:565px;letter-spacing:-0.2px">Lynn N. Tsoflias</span>
<div style="left:377px;top:564px;width:101px;height:13px;background:#ffff00"></div>
<span class="t" style="left:378px;top:565px;">R$ 527.187,50</span>
<div style="left:479px;top:564px;width:101px;height:13px;background:#ffff00"></div>
<span class="t" style="left:480px;top:565px;">R$ 527.187,50</span>
<div style="left:581px;top:564px;width:101px;height:13px;background:#ffff00"></div>
<span class="t" style="left:582px;top:565px;">R$ 527.187,50</span>
<div style="left:683px;top:564px;width:102px;height:13px;background:#ffff00"></div>
<span class="t" style="left:684px;top:565px;">R$ 527.187,50</span>
<div style="left:173px;top:577px;width:612px;height:1px;background:#f1efe2"></div>
<div style="left:8px;top:578px;width:164px;height:13px;background:#ece9d8;border-left:1px solid #f6f4ea;border-top:1px solid #f6f4ea;box-sizing:border-box"></div>
<div style="left:8px;top:591px;width:164px;height:1px;background:#aca899"></div>
<span class="t" style="left:9px;top:579px;letter-spacing:-0.2px">Total Geral</span>
<div style="left:377px;top:578px;width:101px;height:13px;background:#ffff00"></div>
<span class="t" style="left:378px;top:579px;">R$ 13.512.500,00</span>
<div style="left:479px;top:578px;width:101px;height:13px;background:#ffff00"></div>
<span class="t" style="left:480px;top:579px;">R$ 13.512.500,00</span>
<div style="left:581px;top:578px;width:101px;height:13px;background:#ffff00"></div>
<span class="t" style="left:582px;top:579px;">R$ 13.512.500,00</span>
<div style="left:683px;top:578px;width:102px;height:13px;background:#ffff00"></div>
<span class="t" style="left:684px;top:579px;">R$ 13.512.500,00</span>
<div style="left:173px;top:410px;width:101px;height:13px;background:#dbe4f1"></div>
<div style="left:805px;top:184px;width:3px;height:406px;background:#f3f1ec"></div>
<div style="left:807px;top:185px;width:1px;height:15px;background:#c1d3fb"></div>
<div style="left:807px;top:537px;width:1px;height:35px;background:#c1d3fb"></div>
<div style="left:807px;top:575px;width:1px;height:15px;background:#c1d3fb"></div>
</body></html>
